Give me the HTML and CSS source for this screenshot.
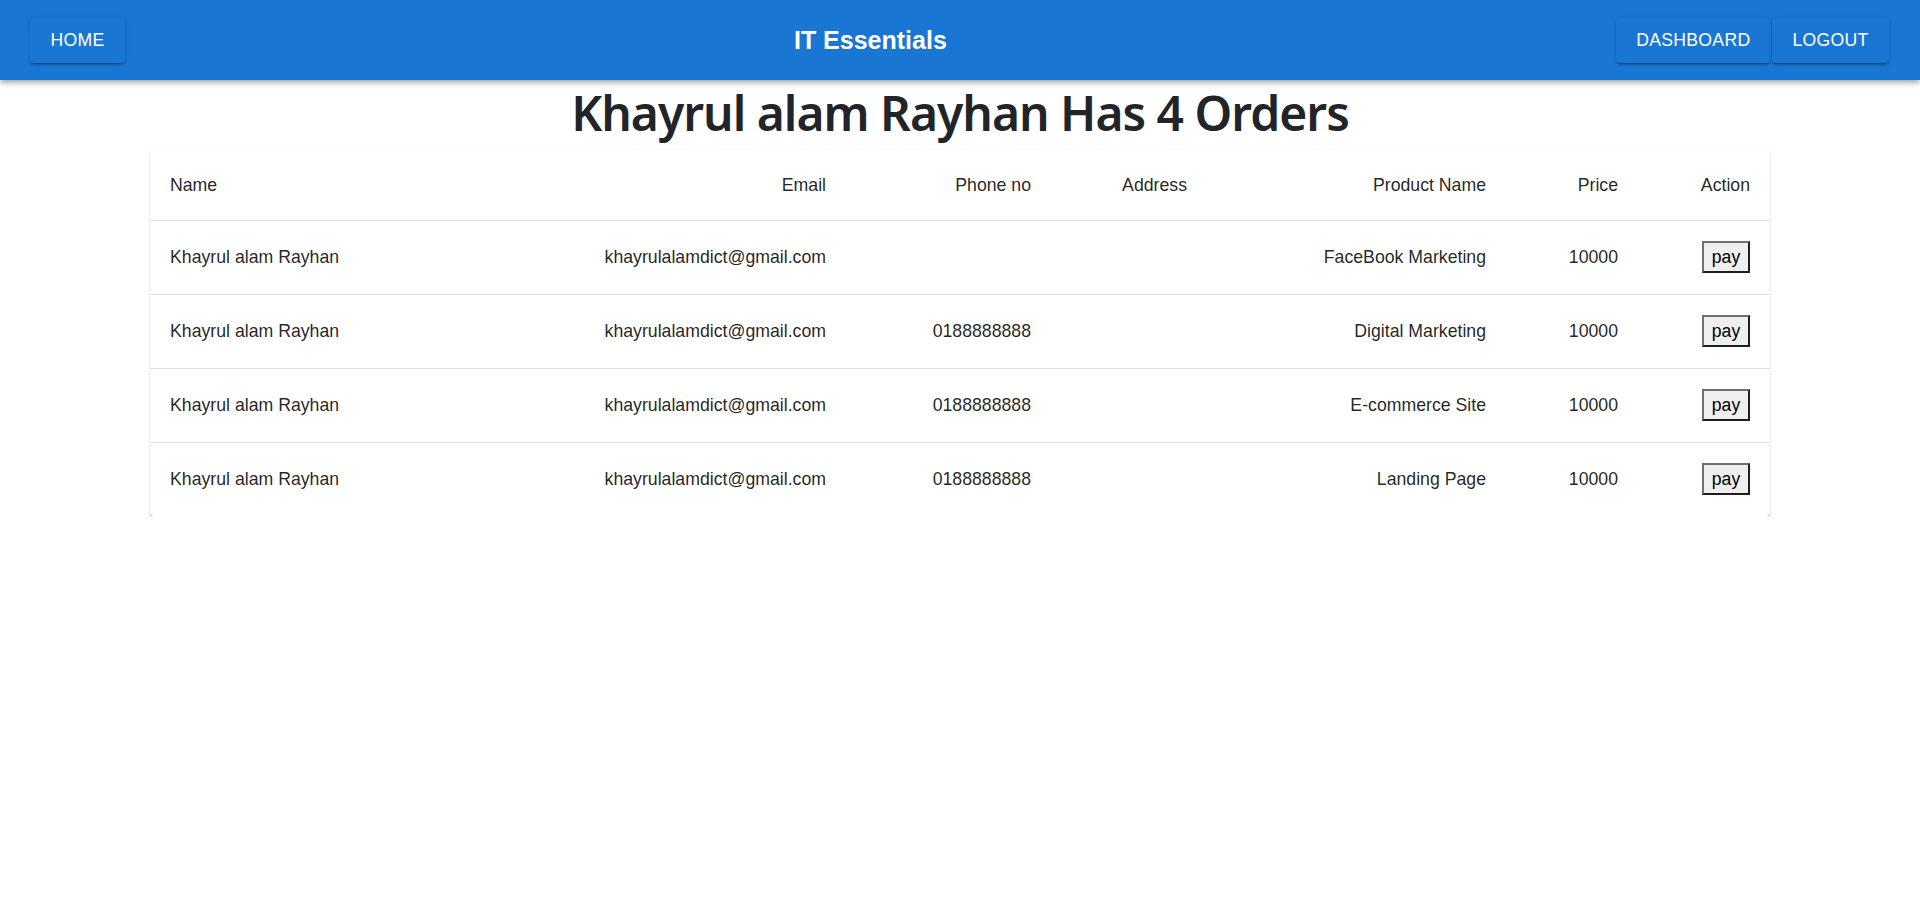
FILE: index.html
```html
<!DOCTYPE html>
<html lang="en">
<head>
<meta charset="utf-8">
<title>IT Essentials</title>
<link rel="stylesheet" href="styles.css">
</head>
<body>
<header class="appbar">
  <button class="nav-btn">HOME</button>
  <div class="brand">IT Essentials</div>
  <div class="nav-right">
    <button class="nav-btn">DASHBOARD</button>
    <button class="nav-btn">LOGOUT</button>
  </div>
</header>
<main class="content">
  <h1 class="page-title">Khayrul alam Rayhan Has 4 Orders</h1>
  <div class="card">
    <table class="orders">
      <colgroup>
        <col class="c-name"><col class="c-email"><col class="c-phone"><col class="c-address"><col class="c-product"><col class="c-price"><col class="c-action">
      </colgroup>
      <thead>
        <tr>
          <th class="left">Name</th>
          <th>Email</th>
          <th>Phone no</th>
          <th>Address</th>
          <th>Product Name</th>
          <th>Price</th>
          <th>Action</th>
        </tr>
      </thead>
      <tbody>
        <tr>
          <td class="left">Khayrul alam Rayhan</td>
          <td>khayrulalamdict@gmail.com</td>
          <td></td>
          <td></td>
          <td>FaceBook Marketing</td>
          <td>10000</td>
          <td><button class="pay">pay</button></td>
        </tr>
        <tr>
          <td class="left">Khayrul alam Rayhan</td>
          <td>khayrulalamdict@gmail.com</td>
          <td>0188888888</td>
          <td></td>
          <td>Digital Marketing</td>
          <td>10000</td>
          <td><button class="pay">pay</button></td>
        </tr>
        <tr>
          <td class="left">Khayrul alam Rayhan</td>
          <td>khayrulalamdict@gmail.com</td>
          <td>0188888888</td>
          <td></td>
          <td>E-commerce Site</td>
          <td>10000</td>
          <td><button class="pay">pay</button></td>
        </tr>
        <tr>
          <td class="left">Khayrul alam Rayhan</td>
          <td>khayrulalamdict@gmail.com</td>
          <td>0188888888</td>
          <td></td>
          <td>Landing Page</td>
          <td>10000</td>
          <td><button class="pay">pay</button></td>
        </tr>
      </tbody>
    </table>
  </div>
</main>
</body>
</html>
```
FILE: styles.css
```css
* { box-sizing: border-box; }

body {
  margin: 0;
  background: #fff;
  font-family: "Liberation Sans", Arial, sans-serif;
  color: rgba(0, 0, 0, 0.87);
}

.appbar {
  height: 80px;
  background: #1976d2;
  display: flex;
  align-items: center;
  padding: 0 31px 0 30px;
  box-shadow: 0 2px 4px -1px rgba(0,0,0,0.2), 0 4px 5px 0 rgba(0,0,0,0.14), 0 1px 10px 0 rgba(0,0,0,0.12);
  position: relative;
  z-index: 1;
}

.nav-btn {
  height: 45px;
  padding: 0 20.5px;
  border: 0;
  border-radius: 4px;
  background: #1976d2;
  color: #fff;
  font-family: "Liberation Sans", Arial, sans-serif;
  font-size: 17.6px;
  letter-spacing: 0.3px;
  box-shadow: 0 3px 1px -2px rgba(0,0,0,0.2), 0 2px 2px 0 rgba(0,0,0,0.14), 0 1px 5px 0 rgba(0,0,0,0.12);
  cursor: pointer;
}

.brand {
  flex: 1;
  text-align: center;
  color: #fff;
  font-weight: bold;
  font-size: 25px;
}

.nav-right {
  display: flex;
  gap: 1px;
}

.content {
  display: flex;
  flex-direction: column;
  align-items: center;
}

.page-title {
  margin: 3px 0 7px;
  font-family: "Noto Sans", "Open Sans", sans-serif;
  font-weight: 600;
  font-size: 48px;
  letter-spacing: -1px;
  line-height: 60px;
  color: #212529;
}

.card {
  width: 1620px;
  background: #fff;
  border-radius: 4px;
  box-shadow: 0 2px 1px -1px rgba(0,0,0,0.3), 0 1px 1px 0 rgba(0,0,0,0.18), 0 1px 3px 0 rgba(0,0,0,0.14);
  overflow: hidden;
}

.orders {
  width: 100%;
  border-collapse: collapse;
  table-layout: fixed;
  font-size: 17.7px;
}

.c-name { width: 420px; }
.c-email { width: 276px; }
.c-phone { width: 205px; }
.c-address { width: 156px; }
.c-product { width: 299px; }
.c-price { width: 132px; }
.c-action { width: 132px; }

.orders th,
.orders td {
  padding: 0 20px;
  text-align: right;
  font-weight: normal;
  vertical-align: middle;
  border-bottom: 1px solid #e0e0e0;
  line-height: 25px;
  white-space: nowrap;
}

.orders th { height: 70px; padding-top: 2px; }
.orders td { height: 74px; }

.orders th.left,
.orders td.left { text-align: left; }

.orders tbody tr:last-child td { border-bottom: 0; }

.pay {
  font-family: "Liberation Sans", Arial, sans-serif;
  font-size: 17.6px;
  line-height: 20px;
  padding: 4px 7.8px;
  background: #efefef;
  color: #000;
  border: 2px solid;
  border-color: #707070 #1f1f1f #1f1f1f #707070;
  border-radius: 0;
  cursor: pointer;
}
```
